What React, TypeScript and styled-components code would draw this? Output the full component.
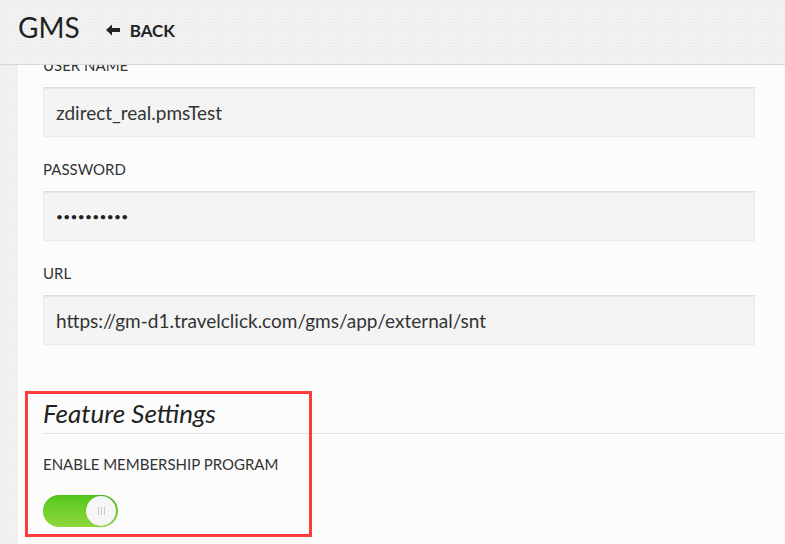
import React from "react";
import styled, { createGlobalStyle } from "styled-components";

const GlobalStyle = createGlobalStyle`
  html, body {
    margin: 0;
    padding: 0;
  }
  body {
    font-family: Lato, "Noto Sans", sans-serif;
    color: #333;
    background: #efefef;
  }
`;

const texture = `
  background-color: #f0f0f0;
  background-image:
    radial-gradient(rgba(0, 0, 0, 0.02) 1px, transparent 1px),
    radial-gradient(rgba(255, 255, 255, 0.5) 1px, transparent 1px);
  background-size: 3px 3px, 3px 3px;
  background-position: 0 0, 1px 1px;
`;

const Page = styled.div`
  display: flex;
  flex-direction: column;
  width: 785px;
  height: 544px;
  overflow: hidden;
`;

const Header = styled.header`
  ${texture}
  display: flex;
  align-items: center;
  gap: 26px;
  height: 65px;
  padding: 0 0 6px 18px;
  border-bottom: 1px solid #d8d8d8;
  box-sizing: border-box;
  flex-shrink: 0;
`;

const Title = styled.h1`
  margin: 0;
  font-size: 28px;
  font-weight: 400;
  color: #222;
  line-height: 1;
  padding-bottom: 4px;
`;

const BackLink = styled.a`
  display: flex;
  align-items: center;
  gap: 10px;
  font-size: 17px;
  font-weight: 700;
  color: #222;
  text-decoration: none;
  padding-top: 2px;
`;

const Body = styled.div`
  display: flex;
  flex: 1;
  min-height: 0;
`;

const Gutter = styled.div`
  ${texture}
  width: 18px;
  flex-shrink: 0;
`;

const Panel = styled.main`
  position: relative;
  flex: 1;
  background: #fcfcfc;
  overflow: hidden;
`;

const Scroller = styled.div`
  margin-top: -9px;
  padding: 0 30px 0 25px;
`;

const Field = styled.div`
  display: flex;
  flex-direction: column;
  gap: 13px;
  margin-bottom: 23px;
`;

const Label = styled.label`
  font-size: 15px;
  text-transform: uppercase;
  color: #333;
  line-height: 18px;
`;

const Input = styled.div`
  height: 50px;
  display: flex;
  align-items: center;
  padding: 0 12px;
  background: #f4f4f4;
  border: 1px solid #ececec;
  border-top-color: #dcdcdc;
  box-shadow: inset 0 1px 1px rgba(0, 0, 0, 0.06);
  box-sizing: border-box;
  font-size: 19px;
  color: #333;
`;

const Dots = styled.span`
  font-size: 12px;
  letter-spacing: 0.3px;
  color: #222;
`;

const Section = styled.section`
  margin-top: 52px;
`;

const SectionTitle = styled.h2`
  margin: 0 -30px 0 0;
  padding-bottom: 4px;
  font-size: 26px;
  line-height: 32px;
  font-weight: 400;
  font-style: italic;
  color: #222;
  border-bottom: 1px solid #e1e1e1;
`;

const SubField = styled.div`
  display: flex;
  flex-direction: column;
  gap: 22px;
  margin-top: 21px;
`;

const Toggle = styled.div<{ on?: boolean }>`
  position: relative;
  width: 75px;
  height: 32px;
  border-radius: 16px;
  background: ${(p) =>
    p.on ? "linear-gradient(#55c81c, #8ed83b)" : "#ddd"};
  box-shadow: inset 0 1px 2px rgba(0, 0, 0, 0.08);
`;

const Knob = styled.div`
  position: absolute;
  top: 1px;
  right: 2px;
  width: 30px;
  height: 30px;
  border-radius: 50%;
  background: #f6f6f6;
  box-shadow: 0 0 2px rgba(0, 0, 0, 0.15);
  display: flex;
  align-items: center;
  justify-content: center;
  gap: 2px;
`;

const Grip = styled.span`
  width: 1px;
  height: 8px;
  background: #c8c8c8;
`;

const Highlight = styled.div`
  position: absolute;
  left: 7px;
  top: 326px;
  width: 281px;
  height: 140px;
  border: 3px solid #ff3b3b;
  pointer-events: none;
`;

const ArrowLeft = () => (
  <svg width="14" height="12" viewBox="0 0 14 12">
    <path d="M0 6 L6 0.5 L6 4 L14 4 L14 8 L6 8 L6 11.5 Z" fill="#222" />
  </svg>
);

const fields = [
  { label: "User Name", value: "zdirect_real.pmsTest" },
  { label: "Password", value: "••••••••••", secret: true },
  { label: "URL", value: "https://gm-d1.travelclick.com/gms/app/external/snt" },
];

export default function App() {
  return (
    <Page>
      <GlobalStyle />
      <Header>
        <Title>GMS</Title>
        <BackLink href="#">
          <ArrowLeft />
          BACK
        </BackLink>
      </Header>
      <Body>
        <Gutter />
        <Panel>
          <Scroller>
            {fields.map((f) => (
              <Field key={f.label}>
                <Label>{f.label}</Label>
                <Input>{f.secret ? <Dots>{f.value}</Dots> : f.value}</Input>
              </Field>
            ))}
            <Section>
              <SectionTitle>Feature Settings</SectionTitle>
              <SubField>
                <Label>Enable Membership Program</Label>
                <Toggle on>
                  <Knob>
                    <Grip />
                    <Grip />
                    <Grip />
                  </Knob>
                </Toggle>
              </SubField>
            </Section>
          </Scroller>
          <Highlight />
        </Panel>
      </Body>
    </Page>
  );
}
